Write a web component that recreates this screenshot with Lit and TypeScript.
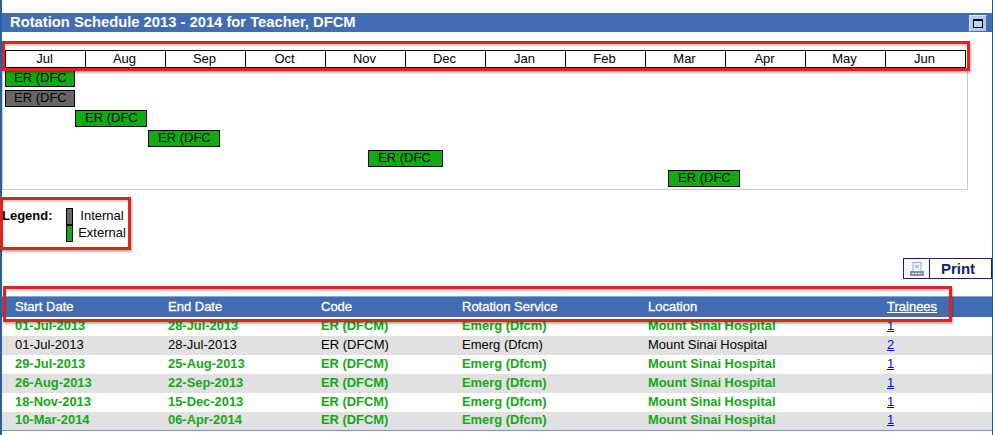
import { LitElement, html, css, svg } from "lit";
import { customElement } from "lit/decorators.js";

const MONTHS = ["Jul", "Aug", "Sep", "Oct", "Nov", "Dec", "Jan", "Feb", "Mar", "Apr", "May", "Jun"];
const BARS = [
  { left: 5, width: 70, pad: 8, internal: false },
  { left: 5, width: 70, pad: 8, internal: true },
  { left: 75, width: 72, pad: 9, internal: false },
  { left: 148, width: 72, pad: 9, internal: false },
  { left: 368, width: 75, pad: 9, internal: false },
  { left: 668, width: 72, pad: 9, internal: false },
];
const ROWS = [
  ["01-Jul-2013", "28-Jul-2013", "1", false],
  ["01-Jul-2013", "28-Jul-2013", "2", true],
  ["29-Jul-2013", "25-Aug-2013", "1", false],
  ["26-Aug-2013", "22-Sep-2013", "1", false],
  ["18-Nov-2013", "15-Dec-2013", "1", false],
  ["10-Mar-2014", "06-Apr-2014", "1", false],
] as const;

@customElement("app-root")
export class AppRoot extends LitElement {
  static styles = css`
    :host {
      display: block;
      position: relative;
      width: 993px;
      height: 435px;
      overflow: hidden;
      box-sizing: border-box;
      padding: 13px 0 0 2px;
      background: #fff;
      font-family: "Liberation Sans", Arial, sans-serif;
      font-size: 13px;
      color: #000;
    }
    .edge-l { position: absolute; left: 0; top: 0; bottom: 0; width: 2px; background: #2c5ea6; }
    .edge-r { position: absolute; right: 0; top: 0; bottom: 0; width: 1px; background: #1f5f78; }
    .title {
      height: 19px;
      background: #426db3;
      color: #fff;
      font-weight: bold;
      font-size: 14.75px;
      line-height: 19px;
      padding: 0 6px 0 8px;
      display: flex;
      justify-content: space-between;
      align-items: center;
    }
    .win-btn {
      width: 18px;
      height: 17px;
      margin-top: 1px;
      box-sizing: border-box;
      border: 1px solid;
      border-color: #e2e9f7 #5c6a85 #5c6a85 #e2e9f7;
      background: #b4c7ec;
      display: flex;
      align-items: center;
      justify-content: center;
    }
    .win-btn span {
      display: block;
      width: 10px;
      height: 9px;
      box-sizing: border-box;
      border: 1px solid #000;
      border-top-width: 2px;
      background: #c4d2ee;
    }
    .timeline {
      margin-top: 11px;
      width: 966px;
      height: 147px;
      box-sizing: border-box;
      border: 1px solid #cccccc;
      padding: 6px 0 0 2px;
    }
    .months {
      display: grid;
      grid-template-columns: 79px repeat(11, 80px);
      width: 961px;
      height: 18px;
      box-sizing: border-box;
      border: 1px solid #000;
      background: #fff;
    }
    .month {
      border-left: 1px solid #000;
      text-align: center;
      line-height: 15px;
      padding-right: 2px;
    }
    .month:first-child { border-left: 0; }
    .bars { display: flex; flex-direction: column; gap: 3px; margin-top: 2px; margin-left: -5px; }
    .bar {
      box-sizing: border-box;
      height: 17px;
      border: 1px solid #000;
      background: #12aa12;
      line-height: 14px;
      white-space: nowrap;
      overflow: hidden;
    }
    .bar.int { background: #666666; }
    .legend {
      display: flex;
      margin-top: 17px;
      height: 34px;
    }
    .legend b { width: 64px; line-height: 17px; }
    .swatches { width: 7px; height: 34px; margin-top: 1px; display: flex; flex-direction: column; }
    .swatches i { display: block; box-sizing: border-box; height: 17px; border: 1px solid #000; background: #666; }
    .swatches i + i { background: #12aa12; }
    .labels { width: 48px; margin-left: 5px; text-align: center; line-height: 17px; }
    .print-row { display: flex; justify-content: flex-end; margin-top: 17px; padding-right: 1px; }
    .print {
      display: flex;
      width: 89px;
      height: 21px;
      box-sizing: border-box;
      border: 1px solid #14206e;
      color: #14206e;
      font-weight: bold;
      font-size: 15px;
      background: #f4f6fb;
    }
    .print .ic {
      width: 25px;
      border-right: 1px solid #14206e;
      display: flex;
      align-items: center;
      justify-content: center;
    }
    .print .tx { flex: 1; text-align: center; line-height: 19px; background: #fff; padding-right: 5px; }
    table {
      margin-top: 17px;
      width: 990px;
      border-collapse: collapse;
      table-layout: fixed;
      border-bottom: 1px solid #6f94d2;
    }
    th {
      height: 20px;
      padding: 0 0 0 13px;
      background: #426db3;
      border-top: 1px solid #8aa6d8;
      color: #fff;
      font-weight: normal;
      -webkit-text-stroke: 0.3px #fff;
      font-size: 13px;
      text-align: left;
      box-sizing: border-box;
    }
    td {
      height: 19px;
      padding: 0 0 2px 13px;
      box-sizing: border-box;
      white-space: nowrap;
      line-height: 15px;
    }
    tr.alt td { background: #e1e1e1; }
    tr.ext td { color: #12aa12; font-weight: bold; font-size: 12.9px; }
    td a { color: #0000ee; font-weight: normal; text-decoration: underline; }
    .mark {
      position: absolute;
      box-sizing: border-box;
      border: 3px solid #e0241b;
      box-shadow: 1px 2px 2px rgba(0, 0, 0, 0.3), inset 0 2px 2px rgba(0, 0, 0, 0.2);
      pointer-events: none;
    }
    .m1 { left: 2px; top: 41px; width: 968px; height: 30px; }
    .m2 { left: 0; top: 197px; width: 131px; height: 53px; }
    .m3 { left: 3px; top: 286px; width: 949px; height: 36px; }
  `;

  private printer() {
    return svg`<svg width="14" height="14" viewBox="0 0 14 14">
      <rect x="3" y="0.5" width="8" height="9" fill="#eef2f6" stroke="#a8aeb6"/>
      <rect x="5" y="3" width="4" height="3" fill="#9fd0ea"/>
      <rect x="0" y="9" width="14" height="5" fill="#8d9298"/>
      <path d="M2 11.5h10" stroke="#e4e6e8" stroke-dasharray="2 1"/>
    </svg>`;
  }

  render() {
    return html`
      <div class="edge-l"></div>
      <div class="edge-r"></div>
      <div class="title">
        <span>Rotation Schedule 2013 - 2014 for Teacher, DFCM</span>
        <div class="win-btn"><span></span></div>
      </div>
      <div class="timeline">
        <div class="months">${MONTHS.map((m) => html`<div class="month">${m}</div>`)}</div>
        <div class="bars">
          ${BARS.map(
            (b) => html`<div
              class="bar ${b.internal ? "int" : ""}"
              style="margin-left:${b.left}px;width:${b.width}px;padding-left:${b.pad}px"
            >ER (DFC</div>`
          )}
        </div>
      </div>
      <div class="legend">
        <b>Legend:</b>
        <div class="swatches"><i></i><i></i></div>
        <div class="labels">Internal<br />External</div>
      </div>
      <div class="print-row">
        <div class="print">
          <div class="ic">${this.printer()}</div>
          <div class="tx">Print</div>
        </div>
      </div>
      <table>
        <colgroup>
          <col style="width:153px" /><col style="width:153px" /><col style="width:141px" />
          <col style="width:186px" /><col style="width:239px" /><col />
        </colgroup>
        <thead>
          <tr>
            <th>Start Date</th><th>End Date</th><th>Code</th>
            <th>Rotation Service</th><th>Location</th><th><u>Trainees</u></th>
          </tr>
        </thead>
        <tbody>
          ${ROWS.map(
            (r, i) => html`<tr class="${i % 2 ? "alt" : ""} ${r[3] ? "" : "ext"}">
              <td>${r[0]}</td><td>${r[1]}</td><td>ER (DFCM)</td>
              <td>Emerg (Dfcm)</td><td>Mount Sinai Hospital</td>
              <td><a href="#">${r[2]}</a></td>
            </tr>`
          )}
        </tbody>
      </table>
      <div class="mark m1"></div>
      <div class="mark m2"></div>
      <div class="mark m3"></div>
    `;
  }
}
